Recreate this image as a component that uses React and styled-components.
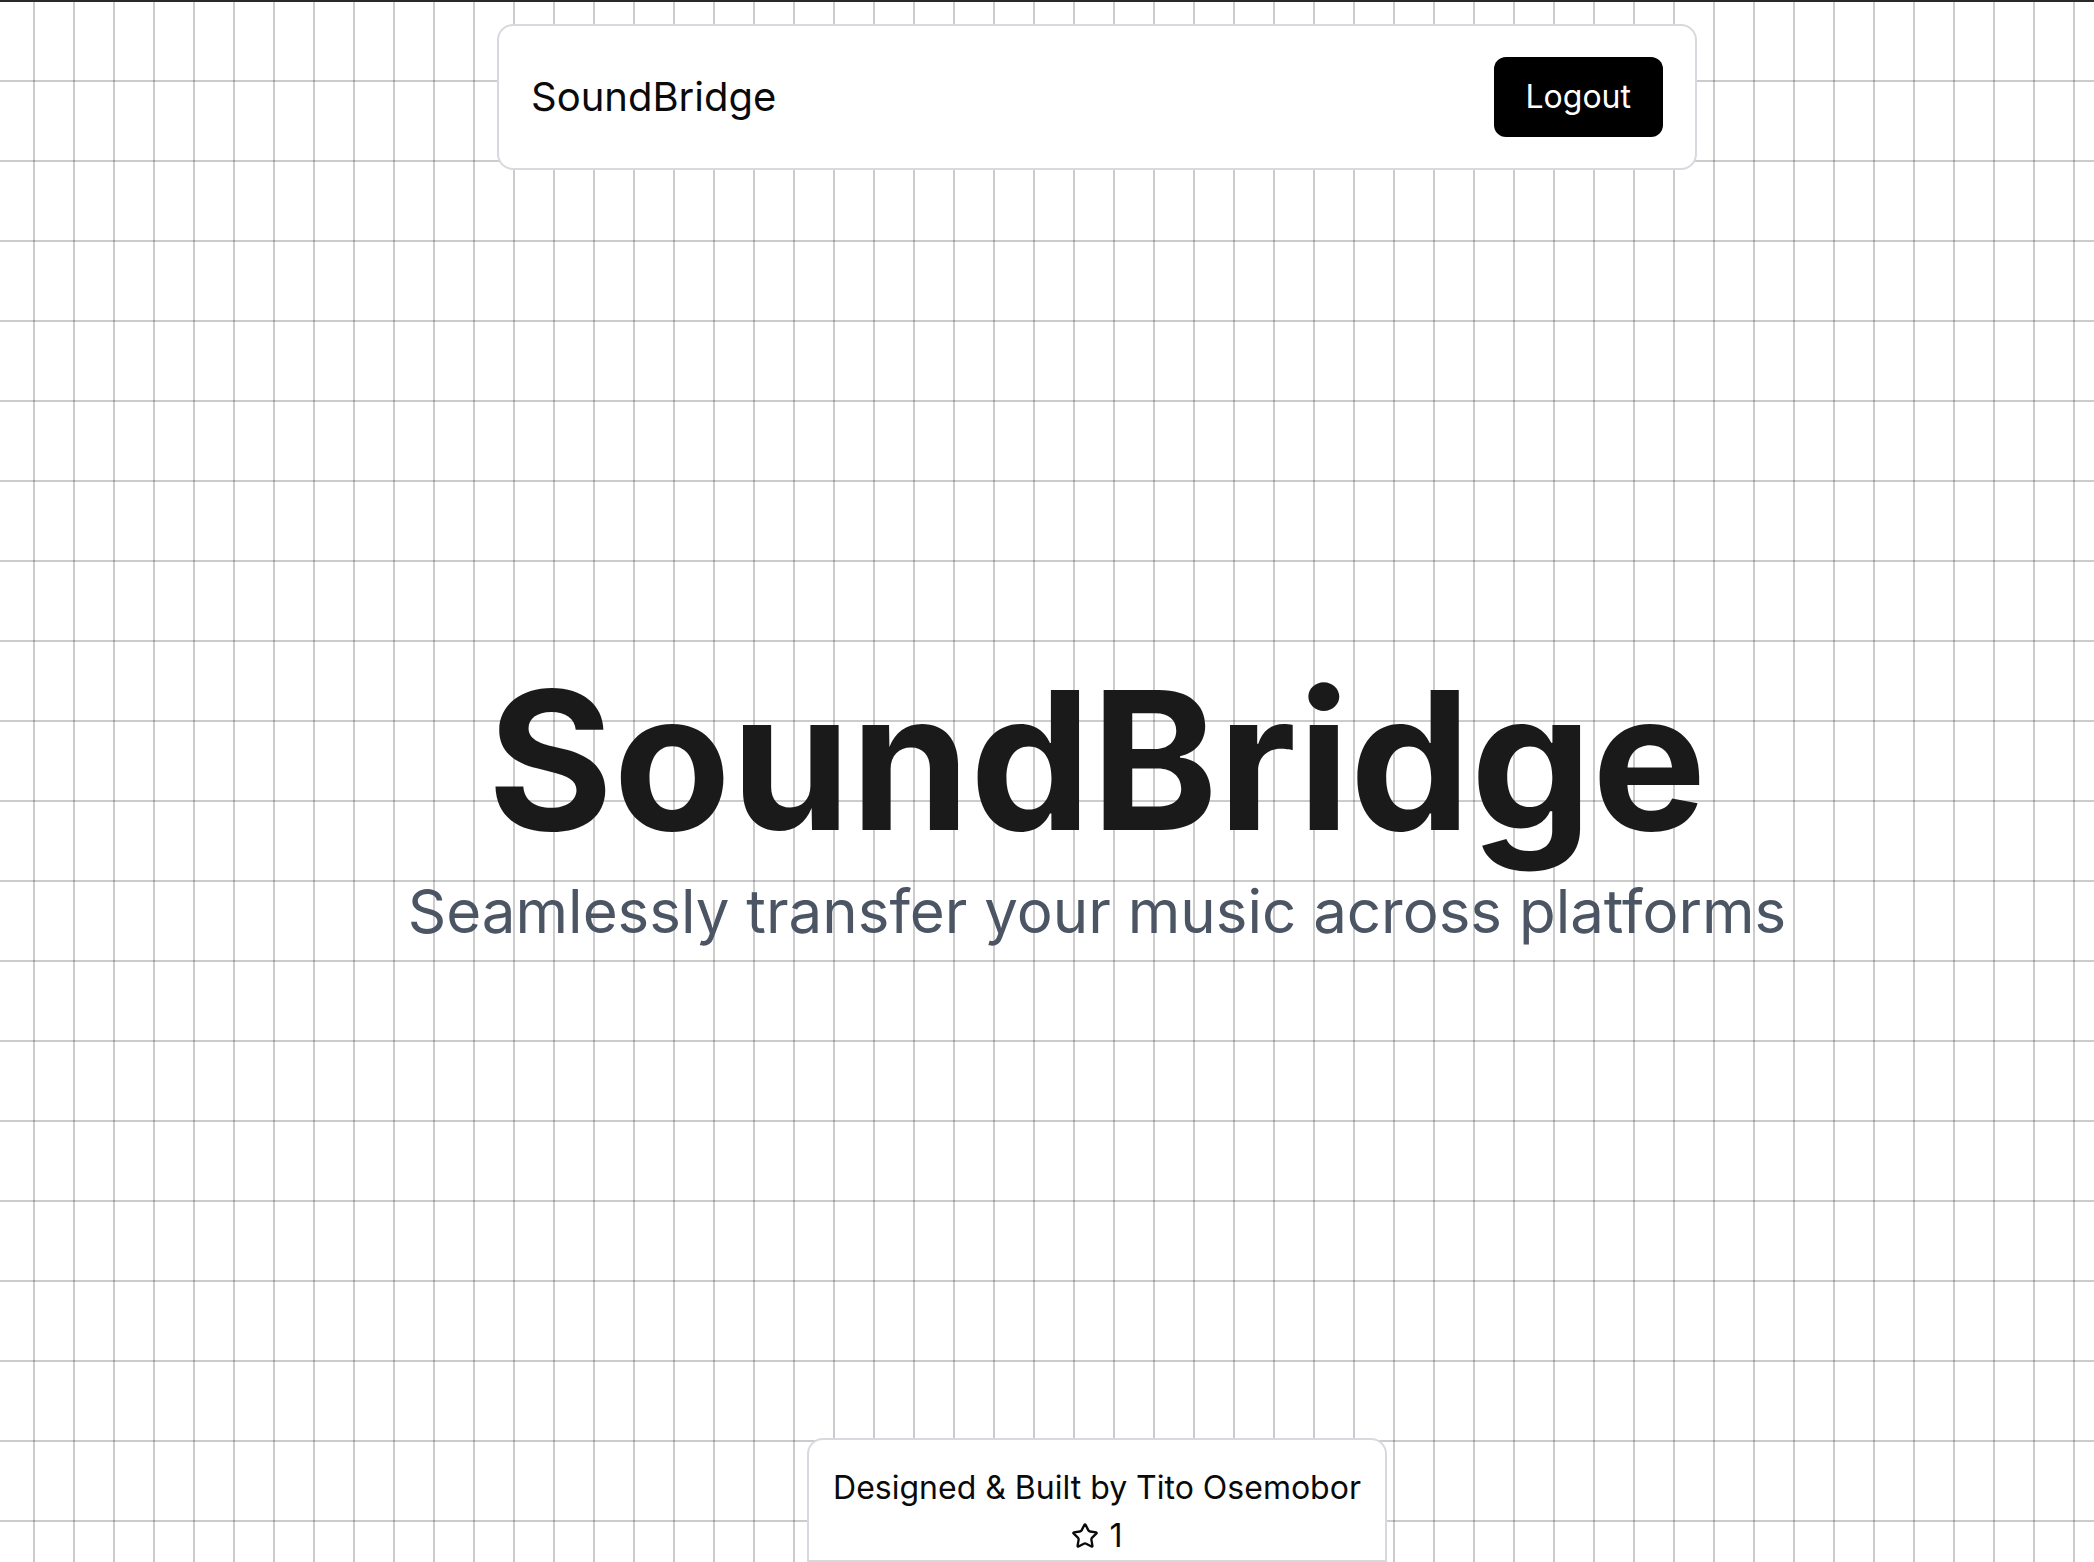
import styled, { createGlobalStyle } from "styled-components";
import { Star } from "lucide-react";

const GlobalStyle = createGlobalStyle`
  html, body {
    margin: 0;
    padding: 0;
  }
  body {
    font-family: Inter, "Noto Sans", sans-serif;
    background-color: #ffffff;
    background-image:
      linear-gradient(to right, rgba(0, 0, 0, 0.2) 2px, transparent 2px),
      linear-gradient(to bottom, rgba(0, 0, 0, 0.2) 2px, transparent 2px);
    background-size: 40px 80px;
    background-position: 33px 0;
  }
`;

const Page = styled.div`
  min-height: 100vh;
  box-sizing: border-box;
  display: flex;
  flex-direction: column;
  align-items: center;
  padding: 22px 0 0 100px;
  border-top: 2px solid #2a2a2a;
`;

const NavBar = styled.header`
  width: 1200px;
  box-sizing: border-box;
  display: flex;
  justify-content: space-between;
  align-items: center;
  padding: 31px 32px;
  background: #ffffff;
  border: 2px solid #d7d9de;
  border-radius: 16px;
`;

const Brand = styled.span`
  font-size: 40px;
  line-height: 60px;
  color: #0a0a0a;
`;

const LogoutButton = styled.button`
  font-family: inherit;
  font-size: 32px;
  line-height: 48px;
  padding: 16px 32px;
  color: #ffffff;
  background: #000000;
  border: none;
  border-radius: 12px;
  cursor: pointer;
`;

const Hero = styled.main`
  flex: 1;
  display: flex;
  flex-direction: column;
  align-items: center;
  justify-content: center;
  padding-bottom: 4px;
`;

const Title = styled.h1`
  margin: 0;
  font-size: 192px;
  font-weight: 700;
  line-height: 1;
  color: #1a1a1a;
`;

const Tagline = styled.p`
  margin: 25px 0 0;
  font-size: 60px;
  line-height: 1;
  color: #4b5563;
`;

const Footer = styled.footer`
  box-sizing: border-box;
  display: flex;
  flex-direction: column;
  align-items: center;
  padding: 24px 24px 0;
  background: #ffffff;
  border: 2px solid #d7d9de;
  border-radius: 16px 16px 0 0;
  font-size: 32px;
  line-height: 48px;
  color: #0a0a0a;
`;

const StarRow = styled.div`
  display: flex;
  align-items: center;
  gap: 10px;
`;

export default function App() {
  return (
    <>
      <GlobalStyle />
      <Page>
        <NavBar>
          <Brand>SoundBridge</Brand>
          <LogoutButton>Logout</LogoutButton>
        </NavBar>
        <Hero>
          <Title>SoundBridge</Title>
          <Tagline>Seamlessly transfer your music across platforms</Tagline>
        </Hero>
        <Footer>
          <span>Designed &amp; Built by Tito Osemobor</span>
          <StarRow>
            <Star size={28} strokeWidth={2} />
            <span>1</span>
          </StarRow>
        </Footer>
      </Page>
    </>
  );
}
